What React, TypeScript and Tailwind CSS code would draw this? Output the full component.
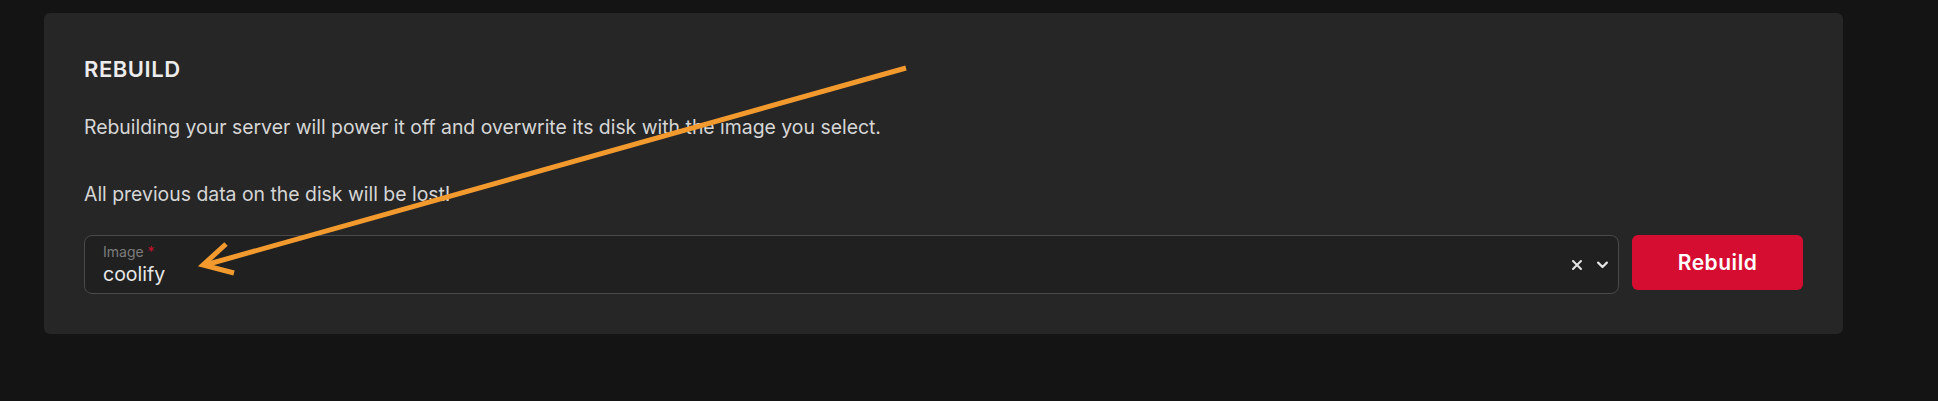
import React from 'react';

const App = () => {
  return (
    <div className="relative min-h-screen w-full bg-[#141414] pl-[44px] pt-[13px] font-['Inter',sans-serif]">
      <div className="flex w-[1799px] flex-col rounded-md bg-[#262626] px-10 pb-10 pt-[42px]">
        <h2 className="text-[22px] font-semibold leading-7 tracking-wide text-[#ececec]">REBUILD</h2>
        <p className="mt-[30px] text-[19.4px] leading-7 text-[#d6d6d6]">
          Rebuilding your server will power it off and overwrite its disk with the image you select.
        </p>
        <p className="mt-[39px] text-[19.4px] leading-7 text-[#d6d6d6]">All previous data on the disk will be lost!</p>
        <div className="mt-[27px] flex items-start gap-[13px]">
          <div className="flex h-[59px] flex-1 items-center rounded-lg border border-[#4a4a4a] bg-[#202020] pl-[18px] pr-2">
            <div className="flex flex-1 flex-col">
              <span className="text-[14px] leading-4 text-[#7c7c7c]">
                Image <span className="text-[#c8102e]">*</span>
              </span>
              <span className="mt-[2px] text-[19.5px] leading-6 text-[#e8e8e8]">coolify</span>
            </div>
            <div className="flex items-center gap-[10px] text-[#e4e4e4]">
              <svg width="16" height="16" viewBox="0 0 24 24" fill="none" stroke="currentColor" strokeWidth="3" strokeLinecap="round">
                <path d="M6 6l12 12M18 6L6 18" />
              </svg>
              <svg width="15" height="15" viewBox="0 0 24 24" fill="none" stroke="currentColor" strokeWidth="3.5" strokeLinecap="round" strokeLinejoin="round">
                <path d="M5 9l7 7 7-7" />
              </svg>
            </div>
          </div>
          <button className="h-[55px] w-[171px] rounded-md bg-[#d50d30] text-[21px] font-semibold tracking-wide text-white">Rebuild</button>
        </div>
      </div>
      <svg className="pointer-events-none absolute inset-0" width="1938" height="401">
        <g stroke="#f29a2e" strokeWidth="5" fill="none" strokeLinejoin="miter">
          <path d="M906 68 L205 265" />
          <path d="M226 244 L203 265 L234 273" />
        </g>
      </svg>
    </div>
  );
};

export default App;
